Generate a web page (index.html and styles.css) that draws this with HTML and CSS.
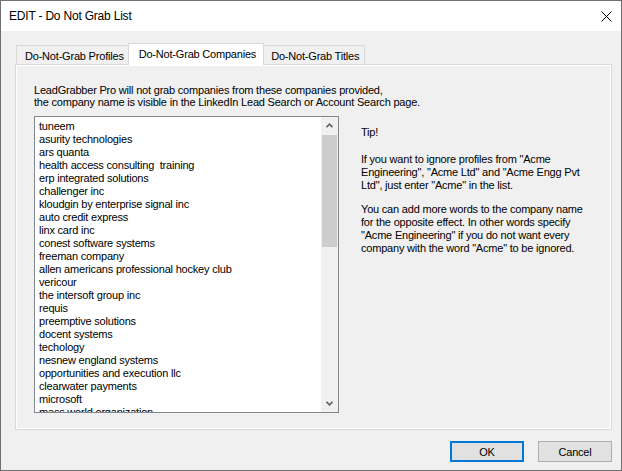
FILE: index.html
```html
<!DOCTYPE html>
<html lang="en">
<head>
  <meta charset="UTF-8">
  <title>EDIT - Do Not Grab List</title>
  <link rel="stylesheet" href="styles.css">
</head>
<body>

<div class="window">
  <div class="titlebar">
    <span class="title">EDIT - Do Not Grab List</span>
    <svg class="close" width="11" height="11" viewBox="0 0 11 11">
      <path d="M0.5 0.5L10.5 10.5M10.5 0.5L0.5 10.5" stroke="#000" stroke-width="1"/>
    </svg>
  </div>

  <div class="dialog">
    <div class="tabs">
      <div class="tab">Do-Not-Grab Profiles</div>
      <div class="tab active">Do-Not-Grab Companies</div>
      <div class="tab">Do-Not-Grab Titles</div>
    </div>

    <div class="panel">
      <div class="page">
        <p class="intro">LeadGrabber Pro will not grab companies from these companies provided,<br>the company name is visible in the LinkedIn Lead Search or Account Search page.</p>

        <div class="page-row">
          <div class="listbox">
            <ul class="items">
              <li>tuneem</li>
              <li>asurity technologies</li>
              <li>ars quanta</li>
              <li>health access consulting  training</li>
              <li>erp integrated solutions</li>
              <li>challenger inc</li>
              <li>kloudgin by enterprise signal inc</li>
              <li>auto credit express</li>
              <li>linx card inc</li>
              <li>conest software systems</li>
              <li>freeman company</li>
              <li>allen americans professional hockey club</li>
              <li>vericour</li>
              <li>the intersoft group inc</li>
              <li>requis</li>
              <li>preemptive solutions</li>
              <li>docent systems</li>
              <li>techology</li>
              <li>nesnew england systems</li>
              <li>opportunities and execution llc</li>
              <li>clearwater payments</li>
              <li>microsoft</li>
              <li>mass world organization</li>
            </ul>
            <div class="scrollbar">
              <div class="sb-btn">
                <svg width="7" height="5" viewBox="0 0 7 5"><path d="M0.5 4.2L3.5 1.2L6.5 4.2" fill="none" stroke="#606060" stroke-width="1.6"/></svg>
              </div>
              <div class="sb-track"><div class="sb-thumb"></div></div>
              <div class="sb-btn">
                <svg width="7" height="5" viewBox="0 0 7 5"><path d="M0.5 0.8L3.5 3.8L6.5 0.8" fill="none" stroke="#606060" stroke-width="1.6"/></svg>
              </div>
            </div>
          </div>

          <div class="tip">
            <p class="tip-head">Tip!</p>
            <p class="tip-one">If you want to ignore profiles from "Acme<br>Engineering", "Acme Ltd" and "Acme Engg Pvt<br>Ltd", just enter "Acme" in the list.</p>
            <p>You can add more words to the company name<br>for the opposite effect. In other words specify<br>"Acme Engineering" if you do not want every<br>company with the word "Acme" to be ignored.</p>
          </div>
        </div>
      </div>
    </div>

    <div class="buttons">
      <button class="btn default">OK</button>
      <button class="btn">Cancel</button>
    </div>
  </div>
</div>

</body>
</html>
```

FILE: styles.css
```css
body { margin: 0; font-family: "Liberation Sans", Arial, sans-serif; font-size: 11px; letter-spacing: -0.2px; color: #000; }

.window {
  width: 622px;
  height: 471px;
  box-sizing: border-box;
  border: 1px solid #707070;
  background: #f0f0f0;
  display: flex;
  flex-direction: column;
}

.titlebar {
  height: 30px;
  flex-shrink: 0;
  background: #fff;
  display: flex;
  align-items: center;
  justify-content: space-between;
  padding: 0 9px 0 8px;
}
.title { font-size: 12px; }

.dialog { padding: 12px 9px 0 14px; }

/* tab strip */
.tabs {
  display: flex;
  align-items: flex-end;
  height: 22px;
  padding-left: 1px;
  margin-bottom: -1px;
  position: relative;
  z-index: 1;
}
.tab {
  height: 19px;
  box-sizing: border-box;
  margin-bottom: 1px;
  padding: 2px 5px 0 8px;
  line-height: 16px;
  border: 1px solid #d9d9d9;
  border-bottom: none;
  background: #f0f0f0;
  white-space: nowrap;
}
.tab.active {
  height: 22px;
  margin: 0 -2px;
  padding: 2px 7px 3px 10px;
  background: #fff;
  position: relative;
  z-index: 2;
}

.panel {
  height: 366px;
  box-sizing: border-box;
  border: 1px solid #d9d9d9;
  background: #fff;
  padding: 1px;
}
.page {
  height: 100%;
  box-sizing: border-box;
  background: #f0f0f0;
  padding: 18px 0 0 17px;
}
.intro { margin: 0 0 8px; line-height: 12px; }

.page-row { display: flex; align-items: flex-start; }

/* list box */
.listbox {
  width: 305px;
  height: 297px;
  box-sizing: border-box;
  border: 1px solid #828790;
  background: #fff;
  display: flex;
}
.items {
  flex: 1;
  list-style: none;
  margin: 0;
  padding: 3px 0 0 4px;
  overflow: hidden;
  line-height: 13px;
}
.items li { white-space: pre; }
.scrollbar { width: 17px; background: #f0f0f0; display: flex; flex-direction: column; }
.sb-btn { height: 17px; display: flex; align-items: center; justify-content: center; }
.sb-track { flex: 1; }
.sb-thumb { height: 112px; margin: 1px 1px 0; background: #cdcdcd; }

.tip { margin-left: 22px; padding-top: 10px; }
.tip p { margin: 0 0 11px; line-height: 13px; white-space: nowrap; }
.tip .tip-head { margin-bottom: 14px; }

.buttons { display: flex; justify-content: flex-end; gap: 14px; margin-top: 11px; }
.btn {
  width: 74px;
  height: 21px;
  box-sizing: border-box;
  padding: 0;
  border: 1px solid #adadad;
  background: #e1e1e1;
  font: inherit;
  letter-spacing: inherit;
  color: #000;
}
.btn.default { border: 2px solid #0078d7; }
```
